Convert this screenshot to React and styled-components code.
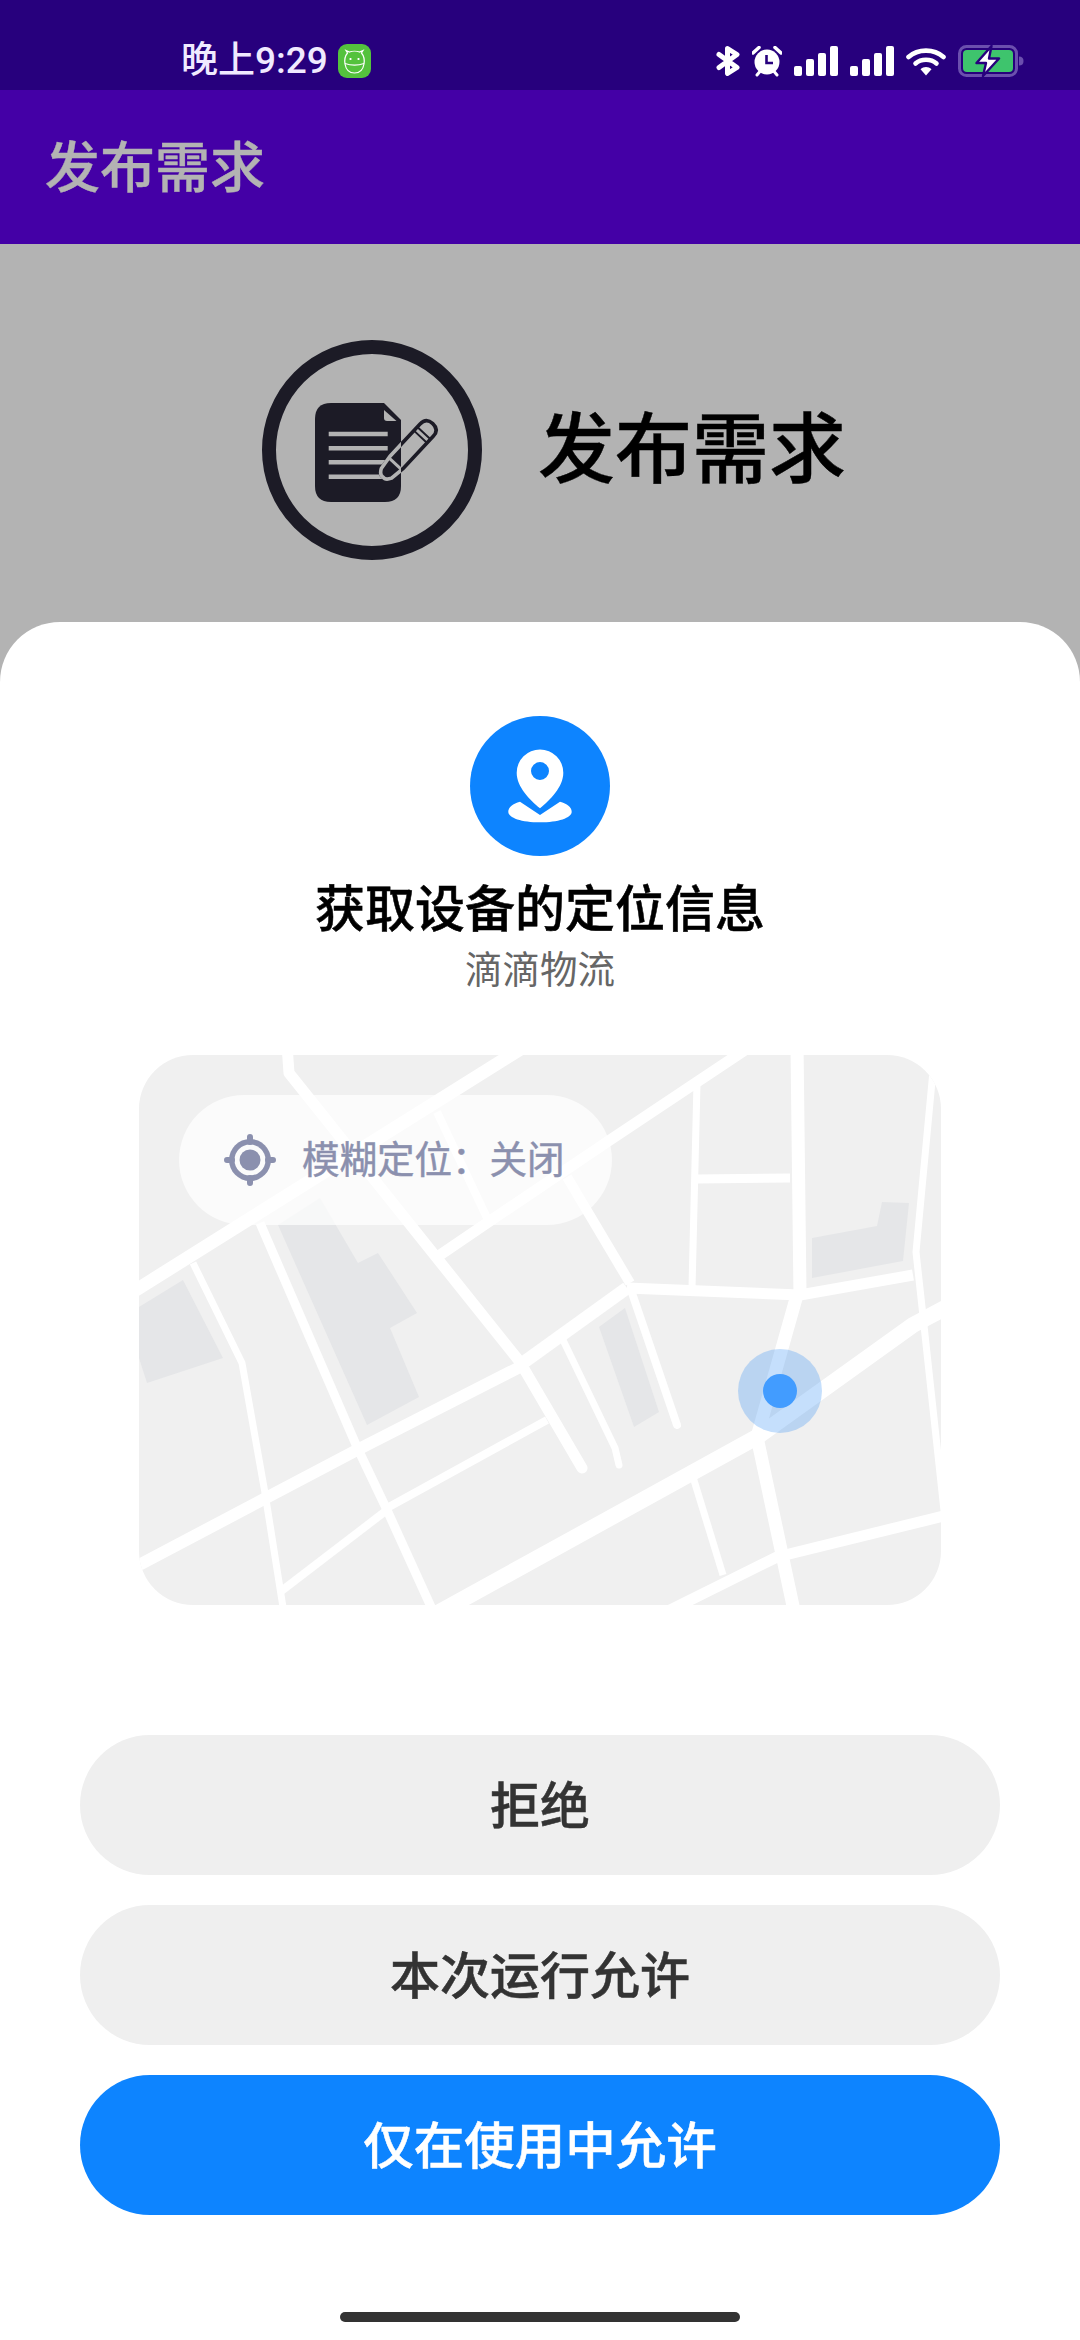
import React from "react";
import styled, { createGlobalStyle } from "styled-components";

const GlobalStyle = createGlobalStyle`
  html, body {
    margin: 0;
    padding: 0;
    background: #b3b3b3;
  }
  * {
    box-sizing: border-box;
  }
`;

const Page = styled.div`
  width: 1080px;
  height: 2340px;
  overflow: hidden;
  display: flex;
  flex-direction: column;
  font-family: "Noto Sans CJK SC", "Noto Sans", sans-serif;
  background: #b3b3b3;
`;

const StatusBar = styled.div`
  height: 90px;
  flex: none;
  background: #27007d;
  display: flex;
  align-items: center;
  padding: 32px 56px 0 181px;
`;

const Clock = styled.span`
  font-family: "Roboto", "Noto Sans CJK SC", sans-serif;
  font-size: 37px;
  font-weight: 500;
  line-height: 50px;
  color: #f0eaff;
`;

const AppBadge = styled.div`
  width: 33px;
  height: 34px;
  margin-left: 10px;
  border-radius: 9px;
  background: #54c23d;
  display: flex;
  align-items: center;
  justify-content: center;
`;

const StatusIcons = styled.div`
  margin-left: auto;
  display: flex;
  align-items: center;
  gap: 12px;
`;

const AppBar = styled.header`
  height: 154px;
  flex: none;
  background: #4400a6;
  display: flex;
  align-items: center;
  padding: 0 0 8px 45px;
  font-size: 55px;
  font-weight: 500;
  -webkit-text-stroke: 0.4px currentColor;
  color: #b3b3b3;
`;

const Hero = styled.section`
  height: 378px;
  flex: none;
  display: flex;
  align-items: flex-start;
  padding: 96px 0 0 262px;
  gap: 56px;
`;

const HeroTitle = styled.h1`
  margin: 0;
  font-size: 77px;
  font-weight: 500;
  line-height: 208px;
  -webkit-text-stroke: 0.4px currentColor;
  color: #000;
`;

const Sheet = styled.section`
  flex: 1;
  background: #fff;
  border-radius: 60px 60px 0 0;
  display: flex;
  flex-direction: column;
  align-items: center;
  padding-top: 94px;
`;

const SheetTitle = styled.h2`
  margin: 16px 0 0;
  font-size: 50px;
  font-weight: 500;
  line-height: 66px;
  -webkit-text-stroke: 0.5px currentColor;
  color: #000;
`;

const SheetSub = styled.p`
  margin: 4px 0 0;
  font-size: 37.5px;
  line-height: 50px;
  color: #666;
`;

const MapCard = styled.div`
  position: relative;
  width: 802px;
  height: 550px;
  margin-top: 63px;
  border-radius: 54px;
  overflow: hidden;
  background: #f0f0f0;
`;

const MapPill = styled.div`
  position: absolute;
  left: 40px;
  top: 40px;
  width: 433px;
  height: 130px;
  border-radius: 65px;
  background: rgba(255, 255, 255, 0.7);
  display: flex;
  align-items: center;
  gap: 26px;
  padding-left: 45px;
  color: #8b90ae;
  white-space: nowrap;
`;

const PillLabel = styled.span`
  font-size: 37.5px;
  line-height: 50px;
  padding-bottom: 6px;
  -webkit-text-stroke: 0.5px currentColor;
`;

const Buttons = styled.div`
  width: 920px;
  margin-top: 130px;
  display: flex;
  flex-direction: column;
  gap: 30px;
`;

const ActionButton = styled.button`
  height: 140px;
  border: 0;
  border-radius: 70px;
  padding: 0 0 6px;
  font-family: inherit;
  font-size: ${(p) => (p.$primary ? "50.5px" : "50px")};
  font-weight: 500;
  -webkit-text-stroke: 0.5px currentColor;
  background: ${(p) => (p.$primary ? "#0d84ff" : "#efefef")};
  color: ${(p) => (p.$primary ? "#fff" : "#333")};
`;

const HomeBar = styled.div`
  width: 400px;
  height: 10px;
  margin-top: 97px;
  border-radius: 5px;
  background: #333;
`;

const Bluetooth = () => (
  <svg width="24" height="30" viewBox="0 0 24 30">
    <path
      d="M3 8.5 L21 21.5 L11.5 27.5 V2.5 L21 8.5 L3 21.5"
      fill="none"
      stroke="#fff"
      strokeWidth="5"
      strokeLinecap="round"
      strokeLinejoin="round"
    />
  </svg>
);

const Alarm = () => (
  <svg width="30" height="31" viewBox="0 0 30 31">
    <circle cx="15" cy="16" r="12.5" fill="#fff" />
    <path d="M1 7 L7 1.5 M29 7 L23 1.5" stroke="#fff" strokeWidth="3.5" strokeLinecap="round" />
    <path d="M5 29 L7.5 26 M25 29 L22.5 26" stroke="#fff" strokeWidth="3" strokeLinecap="round" />
    <path d="M14.5 9 V17 H21" fill="none" stroke="#27007d" strokeWidth="2.6" />
  </svg>
);

const Signal = () => (
  <svg width="44" height="30" viewBox="0 0 44 30">
    <rect x="0" y="20" width="8" height="10" rx="2" fill="#fff" />
    <rect x="12" y="13" width="8" height="17" rx="2" fill="#fff" />
    <rect x="24" y="7" width="8" height="23" rx="2" fill="#fff" />
    <rect x="36" y="0" width="8" height="30" rx="2" fill="#fff" />
  </svg>
);

const Wifi = () => (
  <svg width="40" height="29" viewBox="0 0 40 29">
    <path d="M2.5 10 C12 1.5 28 1.5 37.5 10" fill="none" stroke="#fff" strokeWidth="4.6" strokeLinecap="round" />
    <path d="M9.5 16.5 C15 11.5 25 11.5 30.5 16.5" fill="none" stroke="#fff" strokeWidth="4.6" strokeLinecap="round" />
    <path d="M14.5 22.2 C17.5 19.4 22.5 19.4 25.5 22.2 L20 28.5 Z" fill="#fff" />
  </svg>
);

const Battery = () => (
  <svg width="66" height="32" viewBox="0 0 66 32">
    <rect x="1.5" y="1.5" width="57" height="29" rx="7" fill="none" stroke="#6b4fae" strokeWidth="3" />
    <rect x="5" y="5" width="50" height="22" rx="4" fill="#3ec46d" />
    <path d="M61 11.5 C64 11.5 65.5 13 65.5 16 C65.5 19 64 20.5 61 20.5 Z" fill="#6b4fae" />
    <path
      d="M33.5 1 L18.5 18 H28 L25 31 L41 13.5 H31 Z"
      fill="#fff"
      stroke="#27007d"
      strokeWidth="2.4"
      strokeLinejoin="round"
    />
  </svg>
);

const HippoFace = () => (
  <svg width="23" height="25" viewBox="0 0 23 25" fill="none" stroke="#fff" strokeWidth="1.2">
    <path d="M4.5 4 L3 1.5 L6.5 3 C9 2 14 2 16.5 3 L20 1.5 L18.5 4 C21 7 21.5 12 21 15 C20 21 16 24 11.5 24 C7 24 3 21 2 15 C1.5 12 2 7 4.5 4 Z" />
    <path d="M2 14.5 C8 16.5 15 16.5 21 14.5" />
    <path d="M7.5 9 V11 M15.5 9 V11" strokeWidth="1.8" />
  </svg>
);

const docEdge = "M69 63 H122 L139 80 V146 Q139 162 123 162 H69 Q53 162 53 146 V79 Q53 63 69 63 Z";
const pencilBody = "M5 -7 L20 -9 H64 Q73 -9 73 0 Q73 9 64 9 H20 L5 7 Q-1 4 0 0 Q-1 -4 5 -7 Z";

const DocIcon = () => (
  <svg width="220" height="220" viewBox="0 0 220 220">
    <defs>
      <clipPath id="doc-clip">
        <path d={docEdge} />
      </clipPath>
    </defs>
    <circle cx="110" cy="110" r="103" fill="none" stroke="#1c1b26" strokeWidth="14" />
    <path d={docEdge} fill="#1c1b26" />
    <path d="M122 70 L134.5 81 H125 Q122 81 122 78 Z" fill="#b3b3b3" />
    <g stroke="#b3b3b3" strokeWidth="4.6">
      <path d="M66.7 94 H125.7" />
      <path d="M66.7 108.3 H125.7" />
      <path d="M66.7 122.3 H125.7" />
      <path d="M66.7 136.7 H125.7" />
    </g>
    <g transform="translate(121 137) rotate(-47)">
      <path d={pencilBody} fill="#b3b3b3" stroke="#1c1b26" strokeWidth="3.6" />
      <path d="M60 -9 V9 M55 -9 V9" stroke="#1c1b26" strokeWidth="2" />
    </g>
    <g clipPath="url(#doc-clip)">
      <g transform="translate(121 137) rotate(-47)">
        <path d={pencilBody} fill="#1c1b26" stroke="#b3b3b3" strokeWidth="3.6" />
        <path d="M18 -9 L18 9" stroke="#b3b3b3" strokeWidth="3" />
      </g>
    </g>
  </svg>
);

const PinIcon = () => (
  <svg width="140" height="140" viewBox="0 0 140 140">
    <circle cx="70" cy="70" r="70" fill="#0d84ff" />
    <path
      fillRule="evenodd"
      fill="#fff"
      d="M70 92.3 C60 84 46.7 71 46.7 56.7 A23.3 23.3 0 0 1 93.3 56.7 C93.3 71 80 84 70 92.3 Z M70 46 A9 9 0 1 0 70 64 A9 9 0 1 0 70 46 Z"
    />
    <path
      fill="#fff"
      d="M50 85.7 L70 99 L90 85.7 C97 87.5 101.7 91 101.7 95.7 C101.7 102 88 106.3 70 106.3 C52 106.3 38.3 102 38.3 95.7 C38.3 91 43 87.5 50 85.7 Z"
    />
  </svg>
);

const LocateIcon = () => (
  <svg width="52" height="52" viewBox="0 0 52 52" style={{ flex: "none" }}>
    <circle cx="26" cy="26" r="21" fill="#8b90ae" />
    <circle cx="26" cy="26" r="15.5" fill="#fbfbfb" />
    <circle cx="26" cy="26" r="10.5" fill="#8b90ae" />
    <path d="M26 3 V8 M26 44 V49 M3 26 H8 M44 26 H49" stroke="#8b90ae" strokeWidth="6" strokeLinecap="round" />
  </svg>
);

// road lines, in screenshot pixels; the svg viewBox starts at the map's corner
const roads = [
  { w: 13, d: "M120 1300 L527 1045" },
  { w: 11, d: "M745 1050 L610 1140 L487 1223 L440 1255" },
  { w: 11, d: "M287 1045 L289 1073 L520 1362 L582 1468", cap: true },
  { w: 7, d: "M193 1263 L242 1363 L265 1493 L285 1620" },
  { w: 9, d: "M260 1223 L357 1447 L387 1510 L437 1620" },
  { w: 12, d: "M120 1575 L357 1450 L520 1367" },
  { w: 13, d: "M520 1365 L627 1288" },
  { w: 11, d: "M627 1288 L800 1295 L913 1275" },
  { w: 10, d: "M567 1177 L630 1283" },
  { w: 8, d: "M437 1112 L488 1220" },
  { w: 13, d: "M797 1045 L800 1295" },
  { w: 13, d: "M797 1295 L757 1437 L796 1620" },
  { w: 7, d: "M697 1083 L692 1288" },
  { w: 9, d: "M697 1179 L790 1178" },
  { w: 7, d: "M934 1060 L916 1252 L922 1307 L945 1520" },
  { w: 16, d: "M425 1620 L757 1437 L913 1325 L960 1300" },
  { w: 11, d: "M650 1620 L777 1557 L960 1512" },
  { w: 7, d: "M693 1477 L723 1575" },
  { w: 8, d: "M387 1508 L547 1420" },
  { w: 8, d: "M280 1592 L387 1510" },
  { w: 7, d: "M563 1340 L615 1448 L619 1465", cap: true },
  { w: 8, d: "M632 1293 L677 1425", cap: true },
];

const blocks = [
  "M139 1307 L183 1280 L223 1358 L147 1383 L139 1358 Z",
  "M278 1225 L320 1198 L358 1263 L378 1253 L417 1313 L390 1328 L419 1397 L367 1425 Z",
  "M812 1238 L877 1226 L882 1202 L909 1203 L903 1261 L812 1278 Z",
  "M599 1327 L625 1308 L659 1412 L634 1427 Z",
];

const MapArt = () => (
  <svg width="802" height="550" viewBox="139 1055 802 550" style={{ display: "block" }}>
    {blocks.map((d) => (
      <path key={d} d={d} fill="#e5e6e8" />
    ))}
    {roads.map((r) => (
      <path
        key={r.d}
        d={r.d}
        fill="none"
        stroke="#fff"
        strokeWidth={r.w}
        strokeLinecap={r.cap ? "round" : "butt"}
        strokeLinejoin="round"
      />
    ))}
    <circle cx="780" cy="1391" r="42" fill="#3f95f5" fillOpacity="0.3" />
    <circle cx="780" cy="1391" r="17" fill="#429cff" />
  </svg>
);

const App = () => {
  return (
    <Page>
      <GlobalStyle />
      <StatusBar>
        <Clock>晚上9:29</Clock>
        <AppBadge>
          <HippoFace />
        </AppBadge>
        <StatusIcons>
          <Bluetooth />
          <Alarm />
          <Signal />
          <Signal />
          <Wifi />
          <Battery />
        </StatusIcons>
      </StatusBar>
      <AppBar>发布需求</AppBar>
      <Hero>
        <DocIcon />
        <HeroTitle>发布需求</HeroTitle>
      </Hero>
      <Sheet>
        <PinIcon />
        <SheetTitle>获取设备的定位信息</SheetTitle>
        <SheetSub>滴滴物流</SheetSub>
        <MapCard>
          <MapArt />
          <MapPill>
            <LocateIcon />
            <PillLabel>模糊定位：关闭</PillLabel>
          </MapPill>
        </MapCard>
        <Buttons>
          <ActionButton>拒绝</ActionButton>
          <ActionButton>本次运行允许</ActionButton>
          <ActionButton $primary>仅在使用中允许</ActionButton>
        </Buttons>
        <HomeBar />
      </Sheet>
    </Page>
  );
};

export default App;
